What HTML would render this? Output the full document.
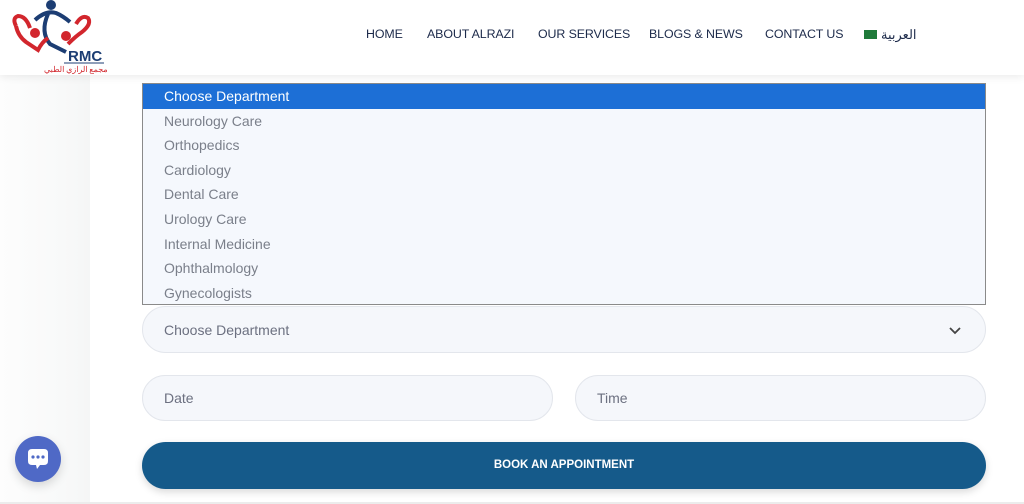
<!DOCTYPE html>
<html><head><meta charset="utf-8"><style>
*{margin:0;padding:0;box-sizing:border-box}
body{width:1024px;height:504px;overflow:hidden;background:#fff;font-family:"Liberation Sans","Noto Sans CJK SC",sans-serif;position:relative}
.left{position:absolute;left:0;top:0;width:90px;height:504px;background:linear-gradient(90deg,#fdfdfd,#f8f9f9 70%,#f5f6f6)}
.hdr{position:absolute;left:0;top:0;width:1024px;height:75px;background:#fff;box-shadow:0 2px 8px rgba(0,0,0,.08);z-index:2}
.nav{position:absolute;top:27px;font-size:12.4px;color:#1c2a4a;letter-spacing:-.1px}
.dd{position:absolute;left:142px;top:83px;width:844px;height:222px;background:#f5f8fd;border:1px solid #8a8a8a;z-index:3}
.dd div{height:24.6px;line-height:24.6px;padding-left:21px;font-size:14px;color:#7a7f8a}
.dd div.sel{background:#1d6fd6;color:#fff}
.pill{position:absolute;background:#f5f7fb;border:1px solid #e3e6ec;border-radius:24px;font-size:14px;color:#6c7080;padding-left:21px;display:flex;align-items:center}
.btn{position:absolute;left:142px;top:442px;width:844px;height:47px;background:#155a8a;border-radius:24px;color:#fff;font-size:11.5px;font-weight:bold;text-align:center;line-height:47px;box-shadow:0 3px 8px rgba(0,0,0,.15)}
.chat{position:absolute;left:15px;top:436px;width:46px;height:46px;border-radius:50%;background:#4f69c6;box-shadow:0 4px 10px rgba(0,0,0,.15)}
</style></head><body>
<div class="left"></div>
<div class="hdr">
<svg width="110" height="75" style="position:absolute;left:8px;top:0">
<circle cx="43" cy="5" r="5" fill="#1c3d73"/>
<path d="M27 20 Q38 10 48 13 Q55 16 62 22" stroke="#1c3d73" stroke-width="4" fill="none"/>
<path d="M40 14 Q32 32 42 44 L58 52" stroke="#1c3d73" stroke-width="4" fill="none"/>
<path d="M8 26 Q4 18 10 16 Q18 16 22 28 M8 26 Q10 36 18 42 L30 50 Q34 42 40 38" stroke="#d2262d" stroke-width="4" fill="none"/>
<path d="M60 44 Q68 36 74 32 Q84 24 80 18 Q74 14 68 24" stroke="#d2262d" stroke-width="4" fill="none"/>
<circle cx="27" cy="33" r="5" fill="#d2262d"/><circle cx="58" cy="36" r="5" fill="#d2262d"/>
<text x="60" y="61" font-family="Liberation Sans" font-weight="bold" font-size="15" fill="#1c3d73">RMC</text>
<line x1="56" y1="63" x2="96" y2="63" stroke="#1c3d73" stroke-width="1"/>
<text x="36" y="72" font-size="8" fill="#d2262d" font-family="Noto Sans CJK SC">مجمع الرازي الطبي</text>
</svg>
<span class="nav" style="left:366px">HOME</span>
<span class="nav" style="left:427px">ABOUT ALRAZI</span>
<span class="nav" style="left:538px">OUR SERVICES</span>
<span class="nav" style="left:649px">BLOGS &amp; NEWS</span>
<span class="nav" style="left:765px">CONTACT US</span>
<span style="position:absolute;left:864px;top:30px;width:13px;height:9px;background:#1f7a3a"></span>
<span class="nav" style="left:881px;top:27px;font-size:13px">العربية</span>
</div>
<div class="dd">
<div class="sel">Choose Department</div><div>Neurology Care</div><div>Orthopedics</div><div>Cardiology</div><div>Dental Care</div><div>Urology Care</div><div>Internal Medicine</div><div>Ophthalmology</div><div>Gynecologists</div>
</div>
<div class="pill" style="left:142px;top:306px;width:844px;height:47px">Choose Department
<svg width="12" height="8" style="position:absolute;right:24px;top:20px"><path d="M1 1 L6 6 L11 1" stroke="#444" stroke-width="1.8" fill="none"/></svg></div>
<div class="pill" style="left:142px;top:375px;width:411px;height:46px">Date</div>
<div class="pill" style="left:575px;top:375px;width:411px;height:46px">Time</div>
<div class="btn">BOOK AN APPOINTMENT</div>
<div class="chat"><svg width="46" height="46"><path d="M13 17 Q13 13 17 13 L29 13 Q33 13 33 17 L33 25 Q33 29 29 29 L25 29 L22 33 L21 29 L17 29 Q13 29 13 25 Z" fill="#fff"/><circle cx="18" cy="21" r="1.6" fill="#4f69c6"/><circle cx="23" cy="21" r="1.6" fill="#4f69c6"/><circle cx="28" cy="21" r="1.6" fill="#4f69c6"/></svg></div>
<div style="position:absolute;left:0;top:502px;width:1024px;height:2px;background:#ececec"></div>
</body></html>
